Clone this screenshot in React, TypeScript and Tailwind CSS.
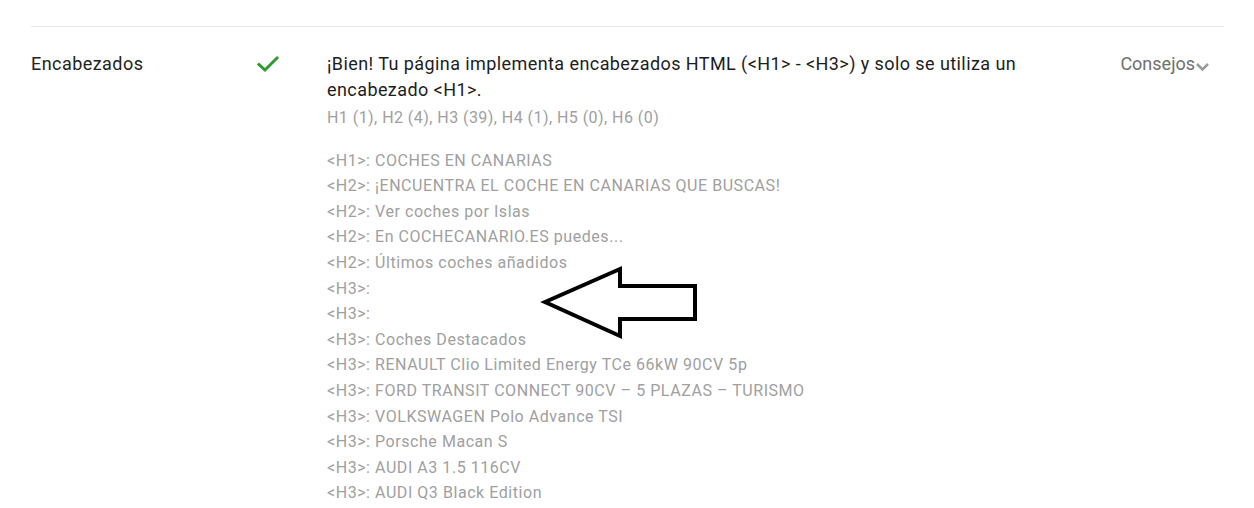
import { useState } from "react";

const headings = [
  "<H1>: COCHES EN CANARIAS",
  "<H2>: ¡ENCUENTRA EL COCHE EN CANARIAS QUE BUSCAS!",
  "<H2>: Ver coches por Islas",
  "<H2>: En COCHECANARIO.ES puedes...",
  "<H2>: Últimos coches añadidos",
  "<H3>:",
  "<H3>:",
  "<H3>: Coches Destacados",
  "<H3>: RENAULT Clio Limited Energy TCe 66kW 90CV 5p",
  "<H3>: FORD TRANSIT CONNECT 90CV – 5 PLAZAS – TURISMO",
  "<H3>: VOLKSWAGEN Polo Advance TSI",
  "<H3>: Porsche Macan S",
  "<H3>: AUDI A3 1.5 116CV",
  "<H3>: AUDI Q3 Black Edition",
];

const Check = () => (
  <svg width="22" height="18" viewBox="0 0 22 18" className="mt-[4px]">
    <path d="M2 9.5 L8 15 L20 3" fill="none" stroke="#2e9b2e" strokeWidth="3" strokeLinecap="square" />
  </svg>
);

export default function App() {
  const [open, setOpen] = useState(false);
  return (
    <div className="relative w-[1254px] h-[508px] overflow-hidden bg-white font-['Roboto',sans-serif]">
      <div className="ml-[31px] w-[1193px] border-t border-[#e9e9e9] mt-[26px]">
        <div className="flex pt-[24px]">
          <div className="w-[226px] text-[18px] leading-[26px] tracking-[0.45px] text-[#222]">Encabezados</div>
          <div className="w-[70px]">
            <Check />
          </div>
          <div className="flex-1">
            <p className="text-[18px] leading-[26px] tracking-[0.42px] text-[#1d1d1d] w-[705px]">
              ¡Bien! Tu página implementa encabezados HTML (&lt;H1&gt; - &lt;H3&gt;) y solo se utiliza un encabezado &lt;H1&gt;.
            </p>
            <p className="text-[16px] leading-[25.6px] tracking-[0.45px] text-[#a0a0a0] mt-[2px]">
              H1 (1), H2 (4), H3 (39), H4 (1), H5 (0), H6 (0)
            </p>
            <ul className="mt-[17px] text-[16px] leading-[25.6px] tracking-[0.55px] text-[#a0a0a0]">
              {headings.map((h, i) => (
                <li key={i}>{h}</li>
              ))}
            </ul>
          </div>
          <button
            className="flex items-start h-[26px] text-[18px] leading-[26px] text-[#6f6f6f] mr-[14px]"
            onClick={() => setOpen((p) => !p)}
          >
            Consejos
            <svg width="15" height="10" viewBox="0 0 15 10" className="mt-[11px]">
              <path d="M2 2 L7.5 7.5 L13 2" fill="none" stroke="#9a9a9a" strokeWidth="2.5" />
            </svg>
          </button>
        </div>
      </div>
      <svg
        className="absolute left-[540px] top-[264px]"
        width="162"
        height="78"
        viewBox="0 0 162 78"
      >
        <polygon
          points="5,38 80,5 80,22 155,22 155,55 80,55 80,72"
          fill="none"
          stroke="#000"
          strokeWidth="4"
          strokeLinejoin="miter"
        />
      </svg>
    </div>
  );
}
